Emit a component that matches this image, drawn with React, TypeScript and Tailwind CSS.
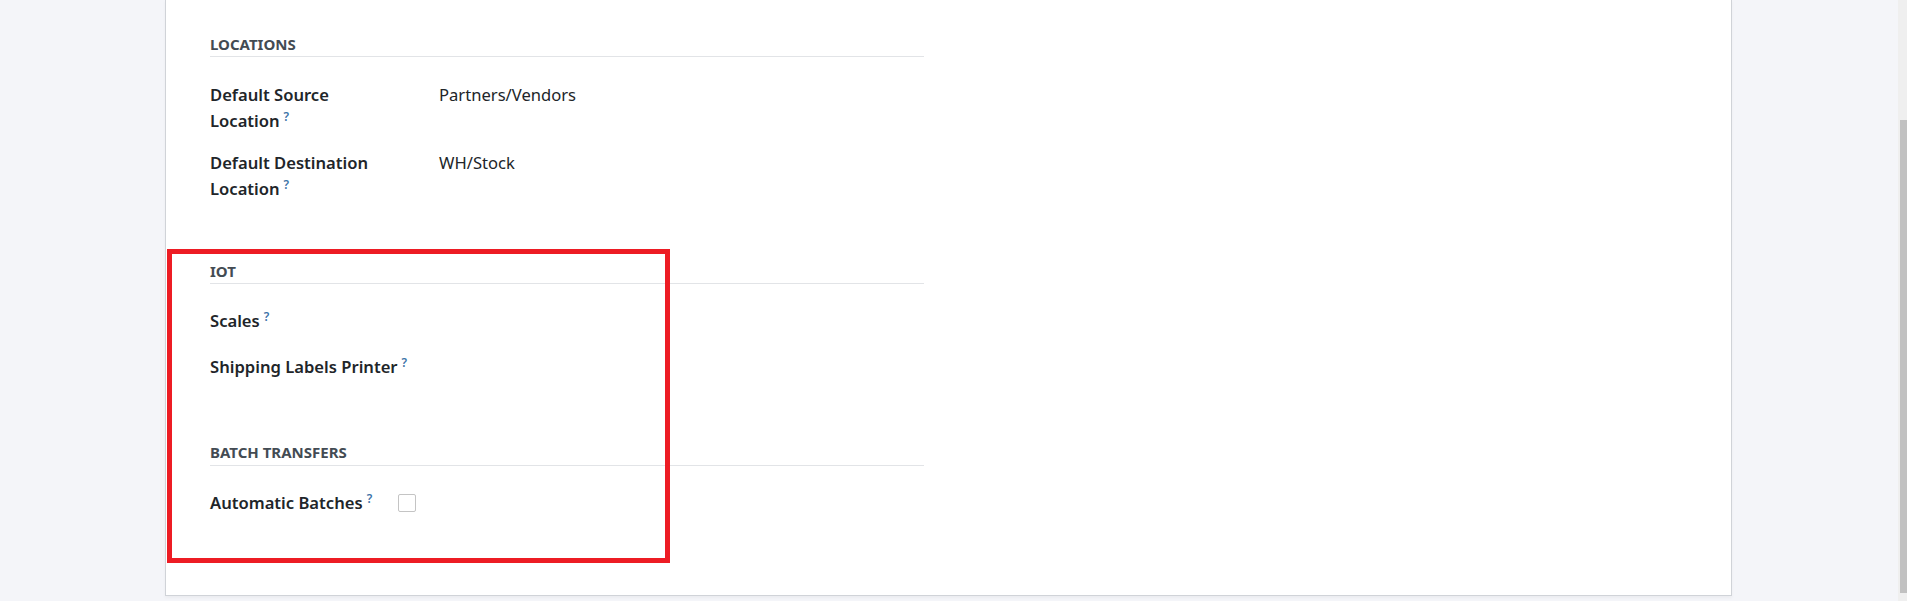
import React from "react";

function Q() {
  return <sup className="ml-[4px] text-[12px] font-semibold text-[#3c73a8]">?</sup>;
}

function Header({ children, pb = "pb-[2px]" }: { children: React.ReactNode; pb?: string }) {
  return (
    <div className={`w-[714px] border-b border-[#e2e4e7] ${pb}`}>
      <div className="text-[15px] leading-[20px] font-bold uppercase text-[#434b53]">{children}</div>
    </div>
  );
}

export default function App() {
  return (
    <div className="flex h-[601px] w-[1907px] overflow-hidden bg-[#f4f5f9] font-['Noto_Sans',sans-serif] text-[#212529]">
      <div className="min-w-0 flex-1">
        <div className="relative ml-[165px] h-[596px] w-[1567px] border-x border-b border-[#d0d3d8] bg-white pl-[44px] pt-[34px] shadow-[0_2px_3px_rgba(0,0,0,0.04)]">
          <Header>Locations</Header>

          <div className="mt-[25px] grid grid-cols-[229px_1fr] text-[16.6px] leading-[26px]">
            <div className="font-semibold">
              Default Source
              <br />
              Location
              <Q />
            </div>
            <div>Partners/Vendors</div>
          </div>

          <div className="mt-[16px] grid grid-cols-[229px_1fr] text-[16.6px] leading-[26px]">
            <div className="font-semibold">
              Default Destination
              <br />
              Location
              <Q />
            </div>
            <div>WH/Stock</div>
          </div>

          <div className="mt-[59px]">
            <Header>IoT</Header>
          </div>

          <div className="mt-[24px] text-[16.6px] font-semibold leading-[26px]">
            Scales
            <Q />
          </div>
          <div className="mt-[20px] text-[16.6px] font-semibold leading-[26px]">
            Shipping Labels Printer
            <Q />
          </div>

          <div className="mt-[62px]">
            <Header pb="pb-[3px]">Batch Transfers</Header>
          </div>

          <div className="mt-[24px] grid grid-cols-[188px_1fr] items-center text-[16.6px] leading-[26px]">
            <div className="font-semibold">
              Automatic Batches
              <Q />
            </div>
            <div className="h-[18px] w-[18px] rounded-[2px] border border-[#c4c4c4] bg-white" />
          </div>

          <div className="pointer-events-none absolute left-[1px] top-[249px] h-[314px] w-[503px] border-[5px] border-[#ed1c24]" />
        </div>
      </div>
      <div className="flex w-[9px] flex-col bg-[#efefef]">
        <div className="ml-[2px] mt-[120px] h-[473px] w-[7px] bg-[#c1c1c1]" />
      </div>
    </div>
  );
}
